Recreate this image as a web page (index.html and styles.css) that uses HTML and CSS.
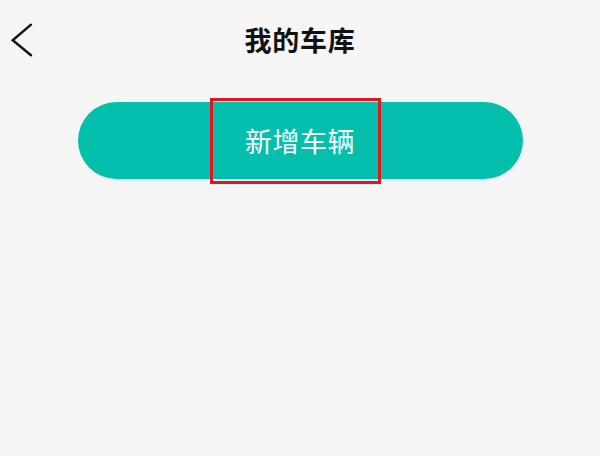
FILE: index.html
```html
<!DOCTYPE html>
<html lang="zh">
<head>
<meta charset="utf-8">
<title>我的车库</title>
<link rel="stylesheet" href="styles.css">
</head>
<body>
<header class="nav">
  <div class="nav-left">
    <svg class="back" viewBox="0 0 24 36" width="24" height="36" aria-hidden="true">
      <path d="M21 2.7 L2.7 18.3 L21 33.3" fill="none" stroke="#111" stroke-width="2.4" stroke-linecap="round" stroke-linejoin="miter"/>
    </svg>
  </div>
  <h1 class="title">我的车库</h1>
  <div class="nav-right"></div>
</header>
<main class="content">
  <div class="btn-wrap">
    <div class="add-btn" role="button">
      <span class="add-label">新增车辆</span>
    </div>
    <div class="highlight"></div>
  </div>
</main>
</body>
</html>
```

FILE: styles.css
```css
html, body {
  margin: 0;
  padding: 0;
  background: #f5f5f5;
  font-family: "Noto Sans CJK SC", "Noto Sans", sans-serif;
}

.nav {
  display: grid;
  grid-template-columns: 1fr auto 1fr;
  align-items: center;
  height: 79px;
}

.nav-left {
  display: flex;
  align-items: center;
  padding-left: 10px;
}

.back {
  display: block;
}

.title {
  margin: 0;
  font-size: 27px;
  font-weight: 700;
  color: #111;
  line-height: 1;
  letter-spacing: 0.8px;
}

.content {
  display: flex;
  justify-content: center;
  padding-top: 23px;
}

.btn-wrap {
  position: relative;
  width: 445px;
  padding-bottom: 10px;
}

.add-btn {
  height: 77px;
  border-radius: 39px;
  background: #05bfad;
  color: #fff;
  font-size: 27px;
  font-weight: 400;
  letter-spacing: 0.5px;
  display: flex;
  align-items: center;
  justify-content: center;
}

.add-label {
  line-height: 1;
}

.highlight {
  position: absolute;
  box-sizing: border-box;
  left: 132px;
  top: -4px;
  width: 171px;
  height: 86px;
  border: 3px solid #e8141c;
}
```
